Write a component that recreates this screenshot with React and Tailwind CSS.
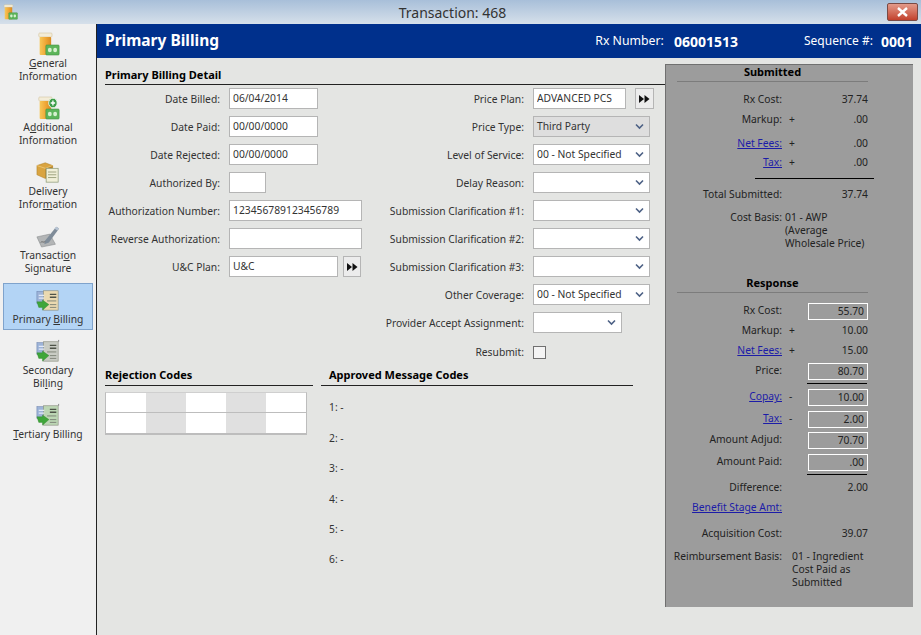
import React from "react";

const font = { fontFamily: '"Noto Sans", Tahoma, sans-serif' };

function Bottle({ plus, w = 23, h = 24 }) {
  return (
    <svg width={w} height={h} viewBox="0 0 26 24" preserveAspectRatio="none">
      <defs>
        <linearGradient id="orange" x1="0" x2="1" y1="0" y2="0">
          <stop offset="0" stopColor="#f7c858" />
          <stop offset="0.5" stopColor="#f0a838" />
          <stop offset="1" stopColor="#d98a20" />
        </linearGradient>
      </defs>
      <rect x="2" y="1" width="15" height="4" rx="1" fill="#f3ecd8" stroke="#cbb98e" strokeWidth="0.5" />
      <rect x="3" y="5" width="13" height="18" rx="1" fill="url(#orange)" />
      <rect x="10" y="13" width="15" height="10" rx="1" fill="#5cb45a" stroke="#3f8f3f" strokeWidth="0.6" />
      <circle cx="14.5" cy="18" r="2.2" fill="#d6f0cf" />
      <circle cx="20.5" cy="18" r="2.2" fill="#d6f0cf" />
      {plus && <circle cx="18" cy="7" r="4.8" fill="#3c9c48" stroke="#e8f5e4" strokeWidth="1" />}
      {plus && <path d="M18 4.5v5M15.5 7h5" stroke="#fff" strokeWidth="1.5" />}
    </svg>
  );
}

function BoxIcon() {
  return (
    <svg width="24" height="24" viewBox="0 0 26 24">
      <path d="M1 5l9-3 8 3v10l-8 4-9-4z" fill="#d9a441" stroke="#a87a22" strokeWidth="0.5" />
      <path d="M10 8l8-3v10l-8 4z" fill="#b98428" />
      <path d="M1 5l9 3 8-3" fill="none" stroke="#f2cf84" strokeWidth="0.8" />
      <rect x="11" y="8" width="13" height="15" fill="#f0efd8" stroke="#8d9a77" strokeWidth="0.8" />
      <path d="M13 12h9M13 15h9M13 18h9" stroke="#9aa07c" strokeWidth="1" />
    </svg>
  );
}

function SignIcon() {
  return (
    <svg width="24" height="25" viewBox="0 0 26 25">
      <path d="M1 14l14-3 6 11-15 3z" fill="#b3b5b6" stroke="#85888a" strokeWidth="0.6" />
      <path d="M10 18L22 3l3 2-11 15-5 2z" fill="#7f8c99" />
      <path d="M22 3l3 2-2 2-3-2z" fill="#b7c4d4" />
      <path d="M5 20c2-2 3 1 5-1" stroke="#555" strokeWidth="0.8" fill="none" />
    </svg>
  );
}

function BillIcon({ paper, num }) {
  return (
    <svg width="24" height="24" viewBox="0 0 26 24">
      <rect x="1" y="3" width="11" height="13" fill="#9db3d8" stroke="#6c83ad" strokeWidth="0.6" />
      <rect x="8" y="2" width="16" height="21" fill={paper} stroke="#8b8f80" strokeWidth="0.7" />
      <path d="M15 6h7M15 9h7" stroke="#4e5348" strokeWidth="1.4" />
      <path d="M12 13h10M15 17h7M15 20h7" stroke="#7b8074" strokeWidth="1" />
      <path d="M3 7h6M3 10h6" stroke="#e2e9f5" strokeWidth="1.2" />
      <path d="M1 14h6v-2l7 5-7 6v-3H3z" fill="#3fa63a" stroke="#2d8129" strokeWidth="0.4" />
      {num && <path d="M24.5 0v2" stroke="#666" strokeWidth="0.8" />}
    </svg>
  );
}

function NavItem({ icon, children, className }) {
  return (
    <div className={"flex flex-col items-center text-[10.3px] leading-[13px] text-[#333] " + className}>
      {icon}
      <div className="mt-[1px] text-center">{children}</div>
    </div>
  );
}

function Label({ w, children }) {
  return <div className={"text-right shrink-0 whitespace-nowrap " + w}>{children}</div>;
}

function TextBox({ w, value }) {
  return (
    <input
      readOnly
      value={value || ""}
      style={font}
      className={"h-[21px] bg-white border border-[#b5b5b5] px-[3px] pb-[2px] text-[10.3px] text-[#333] outline-none " + w}
    />
  );
}

function Drop({ w, value, off }) {
  return (
    <div className={"h-[21px] flex items-center justify-between border border-[#b5b5b5] pl-[3px] pr-[5px] " + w + (off ? " bg-[#dedede]" : " bg-white")}>
      <span className="whitespace-nowrap">{value}</span>
      <svg width="9" height="7" viewBox="0 0 9 7">
        <path d="M1 1.5l3.5 3.5L8 1.5" fill="none" stroke="#4d6185" strokeWidth="1.6" />
      </svg>
    </div>
  );
}

function Ffwd({ w }) {
  return (
    <div className={"h-[21px] flex items-center justify-center bg-[#ececec] border border-[#b5b5b5] " + w}>
      <svg width="11" height="8" viewBox="0 0 11 8">
        <path d="M0 0l5 4-5 4zM5.5 0l5 4-5 4z" fill="#111" />
      </svg>
    </div>
  );
}

function FormRow({ labelW, label, children }) {
  return (
    <div className="h-7 flex items-start gap-[9px]">
      <Label w={labelW + " leading-[23px]"}>{label}</Label>
      {children}
    </div>
  );
}

function Link({ children }) {
  return <span className="text-[#1c1ca8] underline">{children}</span>;
}

// one row of the grey totals panel
function Row({ label, sign, value, boxed, className = "" }) {
  return (
    <div className={"h-5 flex items-center " + className}>
      <div className="w-[116px] text-right shrink-0 whitespace-nowrap">{label}</div>
      <div className="w-[20px] pl-[7px] shrink-0">{sign}</div>
      {boxed ? (
        <div className="ml-[6px] w-[60px] h-[17px] border border-white text-right pr-[3px] leading-[14px]">{value}</div>
      ) : (
        <div className="w-[66px] text-right">{value}</div>
      )}
    </div>
  );
}

function PanelHead({ children, className = "" }) {
  return (
    <div className={"ml-[11px] w-[191px] border-b border-[#7c7c7c] text-center font-bold text-[11px] text-black leading-[14px] " + className}>
      {children}
    </div>
  );
}

export default function App() {
  return (
    <div style={font} className="w-[921px] h-[635px] overflow-hidden flex flex-col bg-[#e4e5e3] text-[10.3px] text-[#333]">
      {/* Title bar */}
      <div className="h-6 shrink-0 flex items-center justify-between pl-[3px] pr-[3px] bg-gradient-to-b from-[#a8bfd9] to-[#d6e0ea]">
        <Bottle w={15} h={16} />
        <div className="text-[14px] text-[#333]">Transaction: 468</div>
        <div className="w-[31px] h-[18px] flex items-center justify-center rounded-[2px] border border-[#7a4a44] bg-gradient-to-b from-[#e29a8a] to-[#c2402c]">
          <svg width="13" height="10" viewBox="0 0 13 10">
            <path d="M2 1l9 8M11 1L2 9" stroke="#fff" strokeWidth="2.4" />
          </svg>
        </div>
      </div>

      <div className="flex-1 flex min-h-0">
        {/* Sidebar */}
        <div className="w-[97px] shrink-0 bg-[#f0f0f0] border-r border-[#222] pt-[8px] pl-[3px] pr-[3px]">
          <NavItem className="h-[64px]" icon={<Bottle />}>
            <div><u>G</u>eneral</div>
            <div>Information</div>
          </NavItem>
          <NavItem className="h-[64px]" icon={<Bottle plus />}>
            <div>A<u>d</u>ditional</div>
            <div>Information</div>
          </NavItem>
          <NavItem className="h-[63px]" icon={<BoxIcon />}>
            <div>Delivery</div>
            <div>Infor<u>m</u>ation</div>
          </NavItem>
          <NavItem className="h-[60px]" icon={<SignIcon />}>
            <div>Transacti<u>o</u>n</div>
            <div>Signature</div>
          </NavItem>
          <NavItem className="h-[47px] pt-[4px] bg-[#b3d4f5] border border-[#7fa3cc]" icon={<BillIcon paper="#ead9b0" />}>
            <div>Primary <u>B</u>illing</div>
          </NavItem>
          <NavItem className="h-[73px] pt-[9px]" icon={<BillIcon paper="#c9ccc4" num />}>
            <div>Secondary</div>
            <div>Bil<u>l</u>ing</div>
          </NavItem>
          <NavItem className="h-[40px]" icon={<BillIcon paper="#bcd6b4" num />}>
            <div><u>T</u>ertiary Billing</div>
          </NavItem>
        </div>

        <div className="flex-1 min-w-0 flex flex-col">
          {/* Blue header */}
          <div className="h-[34px] shrink-0 flex items-center bg-[#00308c] text-white pl-[8px] pr-[8px] text-[12px]">
            <div className="font-bold text-[15.5px]">Primary Billing</div>
            <div className="ml-auto text-[12.3px]">Rx Number:</div>
            <div className="ml-[10px] font-bold text-[14px]">06001513</div>
            <div className="ml-[66px]">Sequence #:</div>
            <div className="ml-[8px] font-bold text-[14px]">0001</div>
          </div>

          <div className="flex-1 flex min-h-0">
            {/* Form */}
            <div className="w-[568px] shrink-0 pl-[8px] pt-[9px]">
              <div className="h-[18px] border-b border-[#222] font-bold text-[11px] text-black leading-[15px]">Primary Billing Detail</div>

              <div className="mt-[3px] flex">
                <div className="w-[265px] shrink-0">
                  <FormRow labelW="w-[115px]" label="Date Billed:"><TextBox w="w-[89px]" value="06/04/2014" /></FormRow>
                  <FormRow labelW="w-[115px]" label="Date Paid:"><TextBox w="w-[89px]" value="00/00/0000" /></FormRow>
                  <FormRow labelW="w-[115px]" label="Date Rejected:"><TextBox w="w-[89px]" value="00/00/0000" /></FormRow>
                  <FormRow labelW="w-[115px]" label="Authorized By:"><TextBox w="w-[37px]" /></FormRow>
                  <FormRow labelW="w-[115px]" label="Authorization Number:"><TextBox w="w-[133px]" value="123456789123456789" /></FormRow>
                  <FormRow labelW="w-[115px]" label="Reverse Authorization:"><TextBox w="w-[133px]" /></FormRow>
                  <FormRow labelW="w-[115px]" label="U&C Plan:">
                    <TextBox w="w-[109px]" value="U&C" />
                    <Ffwd w="-ml-[4px] w-[18px]" />
                  </FormRow>
                </div>
                <div className="flex-1 min-w-0">
                  <FormRow labelW="w-[154px]" label="Price Plan:">
                    <TextBox w="w-[93px]" value="ADVANCED PCS" />
                    <Ffwd w="w-[19px]" />
                  </FormRow>
                  <FormRow labelW="w-[154px]" label="Price Type:"><Drop w="w-[117px]" value="Third Party" off /></FormRow>
                  <FormRow labelW="w-[154px]" label="Level of Service:"><Drop w="w-[117px]" value="00 - Not Specified" /></FormRow>
                  <FormRow labelW="w-[154px]" label="Delay Reason:"><Drop w="w-[117px]" /></FormRow>
                  <FormRow labelW="w-[154px]" label="Submission Clarification #1:"><Drop w="w-[117px]" /></FormRow>
                  <FormRow labelW="w-[154px]" label="Submission Clarification #2:"><Drop w="w-[117px]" /></FormRow>
                  <FormRow labelW="w-[154px]" label="Submission Clarification #3:"><Drop w="w-[117px]" /></FormRow>
                  <FormRow labelW="w-[154px]" label="Other Coverage:"><Drop w="w-[117px]" value="00 - Not Specified" /></FormRow>
                  <FormRow labelW="w-[154px]" label="Provider Accept Assignment:"><Drop w="w-[89px]" /></FormRow>
                  <div className="h-7 pt-[6px] flex items-start gap-[9px]">
                    <Label w="w-[154px] leading-[13px]">Resubmit:</Label>
                    <div className="w-[13px] h-[13px] bg-[#f4f4f4] border border-[#707070]" />
                  </div>
                </div>
              </div>

              <div className="flex">
                {/* Rejection codes */}
                <div className="w-[208px] shrink-0">
                  <div className="h-[18px] border-b border-[#222] font-bold text-[11px] text-black leading-[14px]">Rejection Codes</div>
                  <div className="mt-[6px] w-[202px] grid grid-cols-5 border border-[#bdbdbd] border-t-[#cfcfcf] border-b-2">
                    <div className="h-5 bg-white border-b border-[#bdbdbd]" />
                    <div className="h-5 bg-[#e0e0e0] border-b border-[#bdbdbd]" />
                    <div className="h-5 bg-white border-b border-[#bdbdbd]" />
                    <div className="h-5 bg-[#e0e0e0] border-b border-[#bdbdbd]" />
                    <div className="h-5 bg-white border-b border-[#bdbdbd]" />
                    <div className="h-5 bg-white" />
                    <div className="h-5 bg-[#e0e0e0]" />
                    <div className="h-5 bg-white" />
                    <div className="h-5 bg-[#e0e0e0]" />
                    <div className="h-5 bg-white" />
                  </div>
                </div>

                {/* Approved message codes */}
                <div className="ml-[8px] w-[312px] shrink-0">
                  <div className="h-[18px] border-b border-[#222] font-bold text-[11px] text-black leading-[14px] pl-[8px]">Approved Message Codes</div>
                  <div className="mt-[7px] pl-[8px]">
                    {["1", "2", "3", "4", "5", "6"].map((n) => (
                      <div key={n} className="h-[30.4px] flex items-center">{n}: -</div>
                    ))}
                  </div>
                </div>
              </div>
            </div>

            {/* Totals panel */}
            <div className="mt-[6px] w-[248px] h-[543px] shrink-0 bg-[#9c9c9c] border-l border-t border-[#707070] text-[#222]">
              <PanelHead className="h-[17px]">Submitted</PanelHead>
              <Row className="mt-[8px]" label="Rx Cost:" value="37.74" />
              <Row label="Markup:" sign="+" value=".00" />
              <Row className="mt-[4px]" label={<Link>Net Fees:</Link>} sign="+" value=".00" />
              <Row className="-mt-[1px]" label={<Link>Tax:</Link>} sign="+" value=".00" />
              <div className="mt-[5px] ml-[89px] w-[119px] h-px bg-black" />
              <Row className="mt-[6px]" label="Total Submitted:" value="37.74" />
              <div className="mt-[6px] flex leading-[13px]">
                <div className="w-[116px] text-right shrink-0">Cost Basis:</div>
                <div className="ml-[3px] w-[90px]">01 - AWP<br />(Average<br />Wholesale Price)</div>
              </div>

              <PanelHead className="mt-[26px] h-[17px]">Response</PanelHead>
              <Row className="mt-[8px]" label="Rx Cost:" value="55.70" boxed />
              <Row label="Markup:" sign="+" value="10.00" />
              <Row label={<Link>Net Fees:</Link>} sign="+" value="15.00" />
              <Row label="Price:" value="80.70" boxed />
              <div className="mt-[2px] ml-[141px] w-[60px] h-px bg-black" />
              <Row className="mt-[3px]" label={<Link>Copay:</Link>} sign="-" value="10.00" boxed />
              <Row className="mt-[2px]" label={<Link>Tax:</Link>} sign="-" value="2.00" boxed />
              <Row className="mt-[1px]" label="Amount Adjud:" value="70.70" boxed />
              <Row className="mt-[2px]" label="Amount Paid:" value=".00" boxed />
              <div className="mt-[2px] ml-[141px] w-[60px] h-px bg-black" />
              <Row className="mt-[3px]" label="Difference:" value="2.00" />
              <Row label={<Link>Benefit Stage Amt:</Link>} />
              <Row className="mt-[6px]" label="Acquisition Cost:" value="39.07" />
              <div className="mt-[6px] flex leading-[13px]">
                <div className="w-[116px] text-right shrink-0 whitespace-nowrap">Reimbursement Basis:</div>
                <div className="ml-[10px] w-[80px]">01 - Ingredient<br />Cost Paid as<br />Submitted</div>
              </div>
            </div>
          </div>
        </div>
      </div>
    </div>
  );
}
